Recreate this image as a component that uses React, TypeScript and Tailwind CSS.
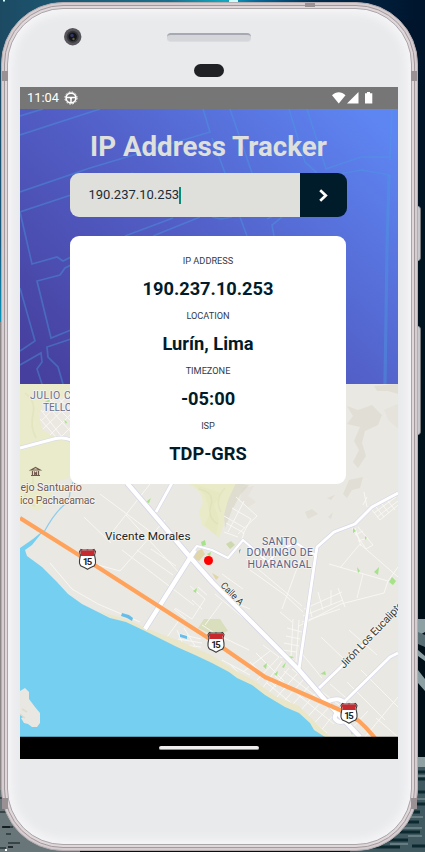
import React from "react";

const details = [
  { label: "IP ADDRESS", value: "190.237.10.253" },
  { label: "LOCATION", value: "Lurín, Lima" },
  { label: "TIMEZONE", value: "-05:00" },
  { label: "ISP", value: "TDP-GRS" },
];

function Wallpaper() {
  return (
    <svg className="absolute inset-0" width="425" height="852" viewBox="0 0 425 852">
      <defs>
        <linearGradient id="sky" x1="0" x2="1" y1="0" y2="0">
          <stop offset="0" stopColor="#1c4a63" />
          <stop offset="0.4" stopColor="#1c6f8c" />
          <stop offset="0.53" stopColor="#12a9c0" />
          <stop offset="0.6" stopColor="#08689a" />
          <stop offset="0.75" stopColor="#022a4c" />
          <stop offset="1" stopColor="#00142c" />
        </linearGradient>
        <linearGradient id="night" x1="0" x2="0" y1="0" y2="1">
          <stop offset="0" stopColor="#00142c" />
          <stop offset="0.3" stopColor="#001420" />
          <stop offset="1" stopColor="#000d14" />
        </linearGradient>
        <linearGradient id="leftSky" x1="0" x2="0" y1="0" y2="1">
          <stop offset="0" stopColor="#1c4a63" />
          <stop offset="0.7" stopColor="#155a80" />
          <stop offset="1" stopColor="#0a94b8" />
        </linearGradient>
      </defs>
      <rect width="425" height="100" fill="url(#sky)" />
      <rect x="400" y="20" width="25" height="832" fill="url(#night)" />
      <rect y="60" width="20" height="262" fill="url(#leftSky)" />
      <rect y="322" width="20" height="530" fill="#8b8787" />
      <path d="M0 790h80v62H0z" fill="#687679" />
      <path d="M0 798h6M0 812h8M3 827h10M8 843h12M0 848h6M6 834h5M2 804h4" stroke="#27363a" strokeWidth="1.5" />
      <path d="M2 827h8M8 847h5" stroke="#0a1013" strokeWidth="1.6" />
      <rect x="5" y="849" width="2" height="2" fill="#fff" />
      <path d="M3 0h2v1.500H3z M229 0h9v2h-9z" fill="#c9ffff" />
      <path d="M418 619h7v13l-7 4z M418 650l7 6v5l-7-5z M418 670l7 9v12l-7-8z" fill="#8da1a4" />
      <path d="M418 632l7 3v12l-7-3z" fill="#576f75" />
      <path d="M350 760h75v92h-75z" fill="#40585f" />
      <path d="M410 757h15v10h-15z" fill="#8fa1a3" />
      <path d="M417 772h8M415 779h10M418 792h7M414 804h11M412 812h8M405 822h14M400 832h20M385 840h23M370 847h30M412 846h13" stroke="#0d2930" strokeWidth="3" />
      <path d="M418 776h7M416 799h9M411 817h12M402 828h20M390 844h18M408 836h14" stroke="#71888c" strokeWidth="1.5" />
    </svg>
  );
}

function StatusBar() {
  return (
    <div className="flex h-[22px] shrink-0 items-center justify-between bg-[#767676] pl-[7px] pr-[25px] text-white">
      <div className="flex items-center gap-[5px]">
        <span className="text-[12.8px] leading-[22px]">11:04</span>
        <svg width="14" height="14" viewBox="0 0 14 14" fill="none" stroke="white">
          <circle cx="7" cy="7" r="4.900" strokeWidth="1.700" />
          <circle cx="7" cy="7" r="6.100" strokeWidth="1" strokeDasharray="1.600 1.600" />
          <path d="M2.500 6.400h9M7 7v4.500" strokeWidth="1.500" />
          <path d="M5.300 6.500h3.400L7 8.700z" fill="white" stroke="none" />
        </svg>
      </div>
      <svg width="41" height="12" viewBox="0 0 41 12" fill="white">
        <path d="M0 3.200C4-.8 9.500-.8 13.500 3.200L6.750 11.500z" />
        <path d="M15 11.500L26.500 0v11.500z" />
        <path d="M33 1.300h2V0h3v1.300h2.300v10.200H33z" />
      </svg>
    </div>
  );
}

function HeaderPattern() {
  return (
    <svg className="absolute inset-0" width="378" height="275" viewBox="20 109 378 275">
      <defs>
        <linearGradient id="hero" gradientUnits="userSpaceOnUse" x1="60" y1="400" x2="350" y2="90">
          <stop offset="0" stopColor="#463f9d" />
          <stop offset="0.5" stopColor="#525fc7" />
          <stop offset="1" stopColor="#5e86f3" />
        </linearGradient>
      </defs>
      <rect x="20" y="109" width="378" height="275" fill="url(#hero)" />
      <g fill="none" stroke="#4b9be0" strokeOpacity="0.42" strokeWidth="1.700">
        <path d="M20 135L100 109M20 116L43 109M20 192L90 168L210 132L203 109" />
        <path d="M133 173L71 195L20 212L32 264L57 257L63 261L71 257" />
        <path d="M71 265L65 268L60 275L37 281L51 338L71 330" />
        <path d="M20 288L35 341L20 351M20 365L41 353L42 362L37 369L42 384" />
        <path d="M71 339L47 347L48 357L58 367L63 384" />
        <path d="M125 236L173 218M153 236L200 217M230 109L252 173M212 138L225 173" />
        <path d="M289 109L305 162L317 173M307 109L326 169L361 157H390M392 109L390 160" />
        <path d="M332 175L362 170L390 175M240 217L247 236M212 217L221 219L232 217M267 219L273 216M282 217L272 225L274 236" />
        <path d="M389 175L387 250L385 384" strokeWidth="3.200" />
      </g>
    </svg>
  );
}

function Shield({ x, y }: { x: number; y: number }) {
  return (
    <g transform={`translate(${x} ${y})`}>
      <path
        d="M-6.500-10.500Q-3-9.500 0-10.300Q3-9.500 6.500-10.500L8-8.500Q6.500-5 7.500-2.500Q9 3.500 6.500 6Q3 7.500 0 9.300Q-3 7.500-6.500 6Q-9 3.500-7.500-2.500Q-6.500-5-8-8.500Z"
        fill="#fff"
        stroke="#403c3c"
        strokeWidth="1.100"
      />
      <path d="M-6.300-10Q-3-9 0-9.800Q3-9 6.300-10L7.400-8.400Q6.300-6.500 6.600-4H-6.600Q-6.300-6.500-7.400-8.400Z" fill="#c62a2f" />
      <text y="5" textAnchor="middle" fontSize="9.500" fontWeight="700" fill="#222" textLength="9.500">15</text>
    </g>
  );
}

function StreetMap() {
  return (
    <svg
      className="block shrink-0 font-['Roboto','Open_Sans',sans-serif]"
      width="378"
      height="353"
      viewBox="20 384 378 353"
    >
      <rect x="20" y="384" width="378" height="353" fill="#eae8e2" />

      {/* Hills and parkland */}
      <path d="M20 384H71V477L58 481L49 500L38 511L25 505L20 500Z" fill="#e9ebca" />
      <path d="M44 402L58 397H71V438L55 437L42 430L39 414Z" fill="#ebe8e2" />
      <path d="M188 483L200 492L203 503L199 512L202 525L213 533L219 538L225 520L230 499L246 483Z" fill="#e9ebc8" />
      <path d="M236 483L249 485L240 495L232 510L225 528L224 515L228 500Z" fill="#deddd0" />
      <path d="M194 484L205 495L210 513L204 525L216 535L219 519L214 505L221 493Z" fill="#dfe2b4" opacity="0.3" />
      <g fill="#dcd9cf" opacity="0.6">
        <path d="M374 386L398 384V394L388 391L377 391Z" />
        <path d="M347 406L358 410L372 405L382 415L378 425L365 431L362 443L366 456L358 468L353 462L359 450L354 441L360 427L347 424L353 416Z" />
        <path d="M384 410L398 404V428L389 421Z" opacity="0.5" />
        <path d="M349 480L363 477L360 488L352 490L347 498L343 494Z" />
        <path d="M305 512L312 509L318 514L308 519ZM327 498L335 495L331 500ZM328 517L333 512L331 519Z" />
        <path d="M243 488L254 486L248 496L256 502L248 507L240 500Z" opacity="0.5" />
      </g>
      <g fill="none" stroke="#dde0b4" strokeWidth="1.500" opacity="0.5">
        <path d="M25 393Q36 401 33 414T36 438M30 470Q37 482 28 491T35 506" />
        <path d="M198 489Q215 492 211 505T218 524M225 488Q214 500 221 512" />
      </g>
      <path d="M220 619L228 631L215 636L198 628L204 619Z" fill="#d9dfbd" />
      <path d="M195 552L202 549L205 554L199 561L193 559ZM212 573L219 577L216 580Z" fill="#e0d6a8" />
      <path d="M226 544L231 541L235 545L230 549Z" fill="#ccd9ae" />

      {/* Local streets */}
      <g fill="none" stroke="#f9f8f5" strokeWidth="0.900">
        <path d="M44 402L70 431M49 399L71 421M57 397L71 410M41 410L62 437M40 419L56 437M43 412L57 397M41 421L68 395M43 429L71 402M50 435L71 414M61 437L71 427" />
        <path d="M84 517L111 543M150 484L110 535M165 520L120 571L98 565M100 494L155 535M126 515L182 576M50 563L72 589L98 604L140 622M122 550L194 605M137 550L173 575M151 549L176 566M174 609L186 619M186 560L156 610M190 586L205 599L192 619L175 608M198 587L207 595M192 600L202 609" />
        <path d="M228 600L250 609M250 570L285 595L303 612M246 559L302 606M222 574L243 589M300 560L282 609M215 594L240 615M222 602L205 625M240 615L260 630M280 612L292 622M202 625L216 634L249 650" />
        <path d="M236 497L257 516L238 534M232 508L251 519L243 534M226 523L244 533L241 542M224 532L238 537M224 516L245 528M244 501L228 532" />
        <path d="M372 510L380 520L398 505M376 507L384 517M382 504L389 513M388 501L395 510M374 513L396 497M377 517L398 501M364 492L367 507M367 497L363 505" />
        <path d="M352 528L366 549L373 545L358 527M355 535L363 531M358 541L368 538M355 528L361 546" />
        <path d="M329 564L388 581L384 593L341 604L299 626M363 574L357 598M398 567L388 581M340 568L360 544L398 577M331 590V605M338 588L345 607M318 592L323 610M308 601L312 617M304 609L342 592M303 616L343 600M302 622L340 609" />
        <path d="M293 619L291 657M299 620L296 662M287 628L302 632M286 636L300 639M284 643L299 646M282 650L297 652M280 657L294 660" />
        <path d="M263 645L279 657L257 680M256 653L284 681M250 662L276 687M270 651L243 672M282 661L257 696M289 668L263 700M297 674L270 705M303 680L278 708M310 685L286 712M317 692L293 719M324 699L301 724M331 705L307 731M338 709L316 737M275 676L334 724M267 683L327 733M261 691L315 728M284 671L340 716M292 669L343 708" />
        <path d="M321 637L345 660M303 655L322 678M349 630L377 655M361 670L398 707M347 682L385 720M365 737L398 697M376 718L398 737M350 730L368 711M330 684L352 703M222 660L250 675M231 665L246 681" />
        <path d="M177 630L183 645L201 647M180 634L201 639M184 628L195 646M165 640L180 619M178 639L202 643" />
      </g>

      {/* Sea, shore and island */}
      <path d="M98 611L126 619L148 629L180 641L213 656L236 671L255 681L275 696L299 706L312 719L330 737H310L285 711L244 683L212 664L176 650L140 632Z" fill="#e9e6c9" />
      <path
        d="M20 548L33 539L44 530L32 545L25 550L27 556L42 567L57 582L68 594L82 604L100 613L110 618L126 622L145 631L177 647L195 655L212 663L229 672L237 678L252 685L265 695L285 707L299 713L310 723L314 730L325 737H20Z"
        fill="#75cff0"
      />
      <path d="M20 691L25 688L29 692V699L35 707L40 713V723L37 727L32 727L28 724L24 723L21 718L24 717L20 714Z" fill="#e9e7e1" />
      <path d="M20 714L25 718M22 709L27 712" stroke="#dedbd3" strokeWidth="1.500" />
      <path d="M44 532Q54 514 62 507T70 492L73 482" fill="none" stroke="#8dcced" strokeWidth="1.200" />
      <path d="M122 613L129 615L133 618L132 621L127 618L121 616ZM180 634L187 636L187 639L180 637ZM239 550L241 549L239 554Z" fill="#67bdea" />
      <g fill="#a5e28a">
        <path d="M43 403L50 399L49 404L45 405ZM64 420L67 422L66 424ZM146 502L151 498L149 503ZM193 591L197 588L196 593ZM201 542L205 540L206 545L202 546ZM207 554L211 552L210 557ZM353 528L356 531L353 533ZM365 536L367 538L365 540ZM374 572L379 567L378 575ZM389 582L392 577L396 581L393 585ZM357 567L360 571L358 573ZM263 666L267 663L266 669ZM274 674L278 671L277 676ZM282 667L286 662L284 668ZM289 656L294 657L290 659ZM319 675L325 671L326 675L321 674ZM350 730L354 731L352 735Z" />
      </g>

      {/* Main roads */}
      <g fill="none" strokeLinejoin="round" strokeLinecap="butt">
        <g stroke="#d7d8ea" strokeWidth="4.200">
          <path d="M20 448L50 440Q62 436 71 440M172 483L156 512" />
          <path d="M398 493L372 507L355 524L334 532L317 547L315 560L299 669" />
          <path d="M319 688L341 667L398 610M344 702L390 657L398 653" />
          <path d="M190 555L197 546L212 550L228 558L243 540L268 562L280 550L296 543L315 555" strokeWidth="3.200" />
        </g>
        <g stroke="#d5d6e8" strokeWidth="6">
          <path d="M127 483L190 557L212 582L299 670L325 700L360 737M195 550L145 629" />
        </g>
        <path d="M328 701Q342 696 345 705Q331 716 336 720Q340 724 347 720" stroke="#d7d8ea" strokeWidth="5.500" />
        <g stroke="#fff" strokeWidth="2.900">
          <path d="M20 448L50 440Q62 436 71 440M172 483L156 512" />
          <path d="M398 493L372 507L355 524L334 532L317 547L315 560L299 669" />
          <path d="M319 688L341 667L398 610M344 702L390 657L398 653" />
          <path d="M190 555L197 546L212 550L228 558L243 540L268 562L280 550L296 543L315 555" strokeWidth="2.200" />
          <path d="M328 701Q342 696 345 705Q331 716 336 720Q340 724 347 720" strokeWidth="4" />
        </g>
        <path d="M127 483L190 557L212 582L299 670L325 700L360 737M195 550L145 629" stroke="#fff" strokeWidth="4.300" />
        <path d="M20 518L82 557L213 641L265 677L340 710L359 721Q367 728 375 738" stroke="#ffa35c" strokeWidth="4.200" />
      </g>

      {/* Place names */}
      <g stroke="#f3f2ed" strokeWidth="1.800" paintOrder="stroke" strokeLinejoin="round">
        <g fill="#6c7192" fontSize="10.500">
          <text x="30" y="398.500" textLength="44">JULIO C.</text>
          <text x="43" y="410.500" textLength="29">TELLO</text>
        </g>
        <g fill="#5d6289" fontSize="10.500">
          <text x="262" y="544.500" textLength="35">SANTO</text>
          <text x="246.500" y="556.300" textLength="66.500">DOMINGO DE</text>
          <text x="247.500" y="568" textLength="64">HUARANGAL</text>
        </g>
        <g fill="#70584c" fontSize="10.800">
          <text x="20.500" y="490.500" textLength="61.500">ejo Santuario</text>
          <text x="20" y="503.500" textLength="75">ico Pachacamac</text>
        </g>
        <text x="105" y="540" fontSize="11.800" fill="#252525" textLength="85.500">Vicente Morales</text>
        <g fill="#393939">
          <text transform="translate(220 586) rotate(45)" fontSize="9.500" textLength="28">Calle A</text>
          <text transform="translate(344 669) rotate(-46.500)" fontSize="10.800" textLength="93">Jirón Los Eucaliptos</text>
        </g>
      </g>
      <g fill="none" stroke="#70584c" strokeWidth="1.200">
        <path d="M31 470L35.500 467.500L40 470ZM32.500 471V475M38.500 471V475M34.700 475V472.500L35.500 473.500L36.500 472.500V475M31 475.500H40" />
      </g>

      <Shield x={87.500} y={560} />
      <Shield x={216} y={643} />
      <Shield x={349} y={714} />
      <circle cx="208.500" cy="560.500" r="4.500" fill="#f00" />
      <path d="M20 736.500H398" stroke="#000" strokeOpacity="0.25" />
    </svg>
  );
}

function Screen() {
  return (
    <main className="flex h-[672px] w-[378px] flex-col overflow-hidden bg-black font-['Roboto',sans-serif]">
      <StatusBar />
      <header className="relative z-10 h-[275px] shrink-0">
        <HeaderPattern />
        <div className="relative flex flex-col items-start pl-[50px] pt-[21px]">
          <h1 className="w-[277px] text-center text-[27.700px] font-bold leading-[34px] text-[#dfe0db]">IP Address Tracker</h1>
          <form className="mt-[9px] flex h-[44px] w-[277px] overflow-hidden rounded-[9px]">
            <div className="flex w-[230px] items-center bg-[#dfe0db] pl-[18.500px] text-[13px] text-[#1b2b36]">
              <span>190.237.10.253</span>
              <span className="h-[17px] w-[2px] bg-[#078a78]" />
            </div>
            <button type="button" aria-label="Search" className="flex flex-1 items-center justify-center bg-[#001c2a]">
              <svg width="9" height="13" viewBox="0 0 9 13" fill="none" stroke="white" strokeWidth="2.700">
                <path d="M1.200 1.200L6.800 6.500L1.200 11.800" />
              </svg>
            </button>
          </form>
          <section className="mt-[19px] flex h-[248px] w-[276px] flex-col items-center rounded-[9px] bg-white pt-[17px]">
            {details.map((item) => (
              <div key={item.label} className="flex h-[55px] flex-col items-center">
                <h2 className="text-[9.200px] leading-[16px] text-[#303a4c]">{item.label}</h2>
                <p className="mt-[8px] text-[18.250px] font-bold leading-[24px] text-[#001c2a]">{item.value}</p>
              </div>
            ))}
          </section>
        </div>
      </header>
      <StreetMap />
      <div className="flex h-[22px] shrink-0 justify-center pt-[9px]">
        <div className="h-[4px] w-[100px] rounded-full border-b border-[#8c918f] bg-[#eeeeee]" />
      </div>
    </main>
  );
}

export default function App() {
  return (
    <div className="relative h-[852px] w-[425px] overflow-hidden bg-[#001019]">
      <Wallpaper />
      {/* Side buttons */}
      <div className="absolute left-[416px] top-[206px] h-[55px] w-[5px] rounded-r-sm border-r border-[#77787b] bg-[#c7c8cb]" />
      <div className="absolute left-[416px] top-[326px] h-[109px] w-[5px] rounded-r-sm border-r border-[#77787b] bg-[#c7c8cb]" />
      <div className="relative px-[1px] pt-[2px]">
        <div className="h-[849px] w-[417px] rounded-[62px] border border-[#b5adb0] bg-[#d6cdd0] p-[2px]">
          <div className="h-full rounded-[59px] border border-[#a39a9e] bg-[#e0d7da] p-[2px]">
            <div className="flex h-full flex-col items-start rounded-[56px] border border-[#aaa5a9] bg-[#e9eaec] pl-[12px] pt-[78px] shadow-[inset_0_0_9px_5px_#f5f5f7]">
              <Screen />
            </div>
          </div>
        </div>
      </div>
      {/* Antenna bands */}
      <div className="absolute left-[2px] top-[71px] h-[10px] w-[6px] bg-[#9a9195]" />
      <div className="absolute left-[411px] top-[71px] h-[10px] w-[6px] bg-[#9a9195]" />
      <div className="absolute left-[305px] top-[3px] h-[4px] w-[10px] bg-[#9a9195]" />
      <div className="absolute left-[2px] top-[798px] h-[11px] w-[6px] bg-[#9a9195]" />
      <div className="absolute left-[411px] top-[798px] h-[11px] w-[6px] bg-[#9a9195]" />
      {/* Camera, earpiece and proximity sensor */}
      <svg className="absolute left-[63px] top-[27px]" width="20" height="20" viewBox="0 0 20 20">
        <circle cx="9.700" cy="9.700" r="8.700" fill="#55555a" />
        <circle cx="9.700" cy="9.700" r="6" fill="#35353a" />
        <circle cx="9.700" cy="9.700" r="4.200" fill="#111319" />
        <circle cx="9" cy="8.500" r="1.700" fill="#313963" />
        <circle cx="10.500" cy="12" r="1.200" fill="#646035" />
      </svg>
      <div className="absolute left-[167px] top-[33px] h-[9px] w-[84px] rounded-[4px] border-b border-t-2 border-b-[#dcdde2] border-t-[#a6a8b2] bg-[#d5d6da]" />
      <div className="absolute left-[194px] top-[64px] h-[13px] w-[30px] rounded-full bg-[#202124]" />
    </div>
  );
}
